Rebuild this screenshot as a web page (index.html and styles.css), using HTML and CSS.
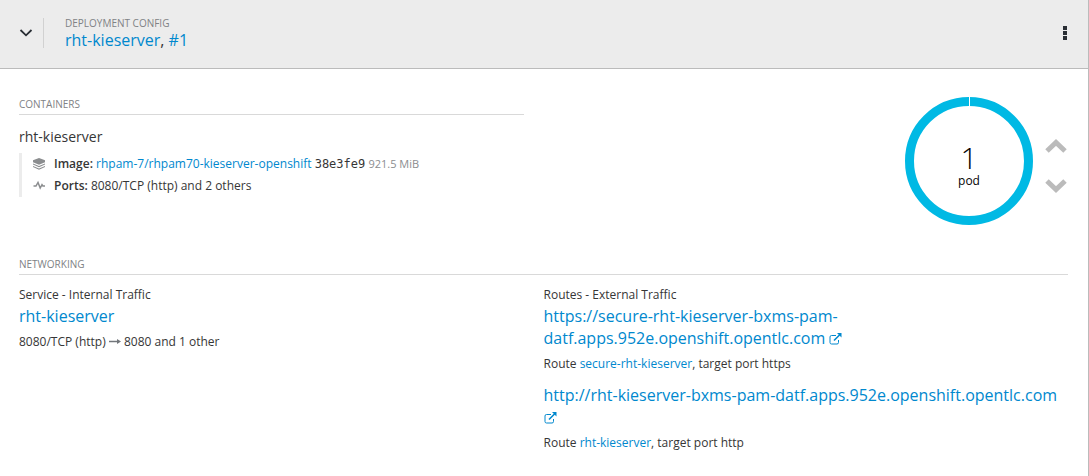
FILE: index.html
```html
<!DOCTYPE html>
<html lang="en">
<head>
<meta charset="utf-8">
<title>rht-kieserver</title>
<link rel="stylesheet" href="styles.css">
</head>
<body>
<main class="card">
  <header class="card-header">
    <button class="icon-button toggle" type="button" aria-label="Collapse">
      <svg width="14" height="14" viewBox="0 0 14 14"><path d="M1.500 4 7 9.300 12.500 4" fill="none" stroke="currentColor" stroke-width="1.800"/></svg>
    </button>
    <div class="heading">
      <div class="eyebrow">DEPLOYMENT CONFIG</div>
      <h1 class="title"><a href="#dc">rht-kieserver</a>, <a href="#rev">#1</a></h1>
    </div>
    <button class="icon-button menu" type="button" aria-label="Actions">
      <svg width="6" height="14" viewBox="0 0 6 14"><path d="M1 0h4v4H1zM1 5h4v4H1zM1 10h4v4H1z" fill="currentColor"/></svg>
    </button>
  </header>
  <div class="card-body">
    <section class="columns overview">
      <div class="column">
        <h2 class="section-title">CONTAINERS</h2>
        <h3 class="container-name">rht-kieserver</h3>
        <div class="facts">
          <div class="fact">
            <svg class="fact-icon" width="12" height="12" viewBox="0 0 12 12"><path d="M0 2.200 6 0l6 2.200v2L6 6.800 0 4.200z" fill="#8b8d8f"/><path d="M0 5.400 6 8l6-2.600v1L6 9.200 0 6.400zM0 7.900l6 2.600 6-2.600v1L6 11.700 0 8.900z" fill="#8b8d8f"/></svg>
            <div><b>Image:</b> <a href="#image">rhpam-7/rhpam70-kieserver-openshift</a> <span class="hash">38e3fe9</span> <span class="size">921.5 MiB</span></div>
          </div>
          <div class="fact">
            <svg class="fact-icon" width="12" height="12" viewBox="0 0 12 12"><path d="M0.500 6h2.500L5 2.500l2.200 5.500 1.800-3.300.9 1.300H12" fill="none" stroke="#8b8d8f" stroke-width="1.500"/></svg>
            <div><b>Ports:</b> 8080/TCP (http) and 2 others</div>
          </div>
        </div>
      </div>
      <div class="scaling">
        <div class="donut">
          <svg class="ring" width="128" height="128" viewBox="0 0 128 128"><circle cx="64" cy="64" r="59.500" fill="none" stroke="#00b9e4" stroke-width="9"/><path d="M64.500 0v10" stroke="#fff"/></svg>
          <div class="count"><span class="number">1</span><span class="unit">pod</span></div>
        </div>
        <div class="arrows">
          <button class="icon-button arrow" type="button" aria-label="Scale up"><svg width="22" height="14" viewBox="0 0 22 14"><path d="M2 12 11 3.500l9 8.500" fill="none" stroke="currentColor" stroke-width="5"/></svg></button>
          <button class="icon-button arrow" type="button" aria-label="Scale down"><svg width="22" height="14" viewBox="0 0 22 14"><path d="M2 2 11 10.500l9-8.500" fill="none" stroke="currentColor" stroke-width="5"/></svg></button>
        </div>
      </div>
    </section>
    <section>
      <h2 class="section-title">NETWORKING</h2>
      <div class="columns">
        <div class="column">
          <div class="kind">Service - Internal Traffic</div>
          <div class="endpoint"><a href="#service">rht-kieserver</a></div>
          <div class="detail">8080/TCP (http) <svg class="to" width="12" height="8" viewBox="0 0 12 8"><path d="M0 3.500h9" stroke="#72767b" stroke-width="1.500"/><path d="M8 1l4 2.500L8 6z" fill="#72767b"/></svg> 8080 and 1 other</div>
        </div>
        <div>
          <div class="kind">Routes - External Traffic</div>
          <div class="endpoint"><a href="#route1">https://secure-rht-kieserver-bxms-pam-datf.apps.952e.openshift.opentlc.com <svg class="external" width="13" height="12" viewBox="0 0 13 12"><path d="M7 2.500H2.500a1.500 1.500 0 0 0-1.500 1.500v5.500a1.500 1.500 0 0 0 1.500 1.500H8a1.500 1.500 0 0 0 1.500-1.500V7" fill="none" stroke="currentColor" stroke-width="1"/><path d="M5 7.500l6-6" stroke="currentColor" stroke-width="1.600"/><path d="M8 0h4.500v4.500z" fill="currentColor"/></svg></a></div>
          <div class="detail">Route <a href="#r1">secure-rht-kieserver</a>, target port https</div>
          <div class="endpoint next"><a href="#route2">http://rht-kieserver-bxms-pam-datf.apps.952e.openshift.opentlc.com <svg class="external" width="13" height="12" viewBox="0 0 13 12"><path d="M7 2.500H2.500a1.500 1.500 0 0 0-1.500 1.500v5.500a1.500 1.500 0 0 0 1.500 1.500H8a1.500 1.500 0 0 0 1.500-1.500V7" fill="none" stroke="currentColor" stroke-width="1"/><path d="M5 7.500l6-6" stroke="currentColor" stroke-width="1.600"/><path d="M8 0h4.500v4.500z" fill="currentColor"/></svg></a></div>
          <div class="detail">Route <a href="#r2">rht-kieserver</a>, target port http</div>
        </div>
      </div>
    </section>
  </div>
</main>
</body>
</html>
```
FILE: styles.css
```css
* { box-sizing: border-box; }
body {
  margin: 0;
  background: #fff;
  color: #363636;
  font: 12px/20px "Open Sans", sans-serif;
}
h1, h2, h3 { margin: 0; font-weight: 400; }
a { color: #0088ce; text-decoration: none; }
b { font-weight: 600; }
.card { min-height: 100vh; border-right: 1px solid #bbb; }
.card-header {
  display: flex;
  align-items: center;
  padding: 16px 20px 18px 19px;
  background: #ececec;
  border-bottom: 1px solid #bbb;
}
.icon-button {
  display: flex;
  padding: 0;
  border: 0;
  background: none;
  color: #292e34;
}
.toggle {
  align-items: center;
  height: 30px;
  padding-right: 10px;
  border-right: 1px solid #d1d1d1;
}
.heading { flex: 1; padding-left: 21px; }
.eyebrow, .section-title {
  color: #808285;
  font-size: 10px;
  line-height: 14px;
}
.title { font-size: 16px; line-height: 20px; }
.card-body { padding: 28px 20px 20px 19px; }
.columns { display: grid; grid-template-columns: 1fr 1fr; }
.column { padding-right: 20px; }
.overview { padding-bottom: 32px; }
.section-title { padding-bottom: 3px; border-bottom: 1px solid #d9d9d9; }
.container-name { margin-top: 12px; font-size: 14px; line-height: 20px; }
.facts {
  margin-top: 6px;
  padding-left: 11px;
  border-left: 3px solid #ececec;
}
.fact { display: flex; align-items: center; gap: 9px; line-height: 22px; }
.hash { font-family: "DejaVu Sans Mono", monospace; }
.size { color: #8b8d8f; font-size: 11px; }
.scaling { display: flex; justify-content: flex-end; align-items: center; gap: 12px; padding-right: 1px; }
.donut { display: grid; place-items: center; }
.ring, .count { grid-area: 1 / 1; }
.count { display: flex; flex-direction: column; align-items: center; padding-top: 12px; color: #030303; }
.number { font-size: 30px; font-weight: 300; line-height: 28px; }
.unit { line-height: 18px; }
.arrows { display: flex; flex-direction: column; gap: 26px; padding-top: 10px; }
.arrow { color: #bbb; }
.kind { margin-top: 10px; }
.endpoint { font-size: 16px; line-height: 22px; }
.external { vertical-align: -1px; }
.next { margin-top: 10px; }
.detail { margin-top: 5px; }
```
